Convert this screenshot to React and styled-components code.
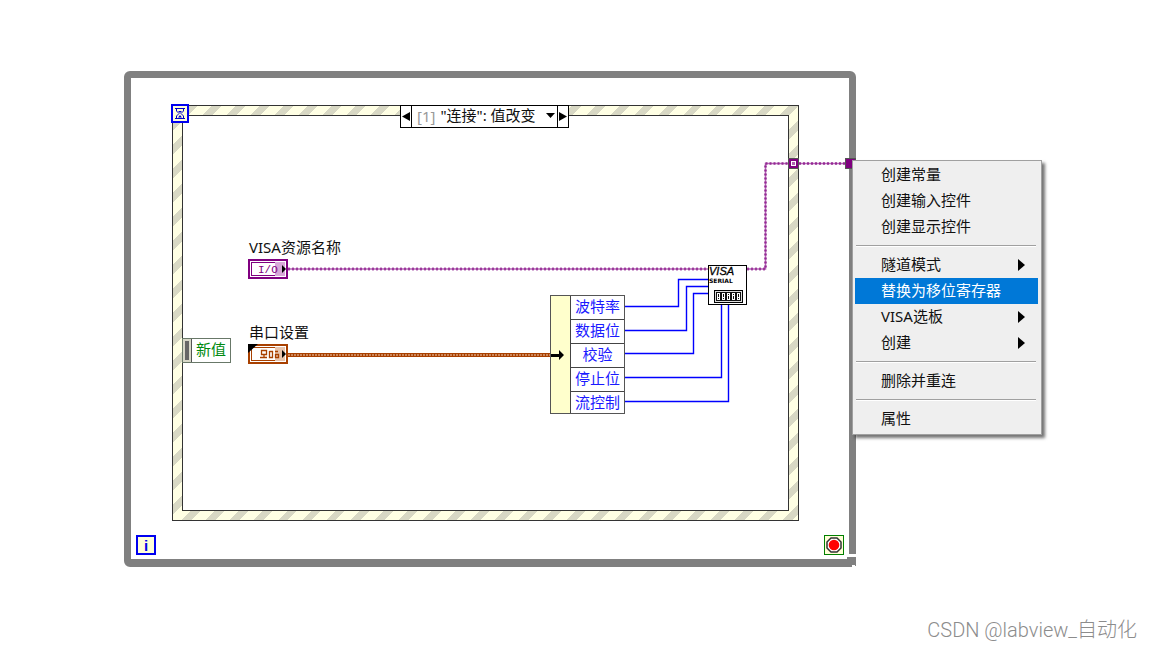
import React from 'react';
import styled, { createGlobalStyle, css } from 'styled-components';

const GlobalStyle = createGlobalStyle`
  *, *::before, *::after { box-sizing: border-box; }
  body {
    margin: 0;
    background: #fff;
    color: #111;
    font: 15px/20px "Noto Sans", "Noto Sans CJK SC", sans-serif;
  }
  button, select { font: inherit; color: inherit; }
`;

const ink = { loop: '#808080', visa: '#800080', cluster: '#a84000', wire: '#0000ff', frame: '#333' };

const Page = styled.div`
  display: flex;
  flex-direction: column;
  min-height: 100vh;
`;

const Canvas = styled.main`
  position: relative;
  flex: 1;
  min-height: 576px;
`;

/* Anything that sits at its own place on the free block-diagram canvas. */
const placed = css`
  position: absolute;
  left: ${(p) => p.$x}px;
  top: ${(p) => p.$y}px;
`;

const WhileLoop = styled.section`
  ${placed}
  display: flex;
  flex-direction: column;
  gap: 14px;
  width: 732px;
  height: 496px;
  padding: 27px 5px 4px;
  border: 7px solid ${ink.loop};
  border-bottom-width: 8px;
  border-radius: 6px 6px 0 6px;
`;

const LoopTerminals = styled.div`
  display: flex;
  justify-content: space-between;
`;

const ResizeCorner = styled.svg`
  ${placed}
  display: block;
`;

const EventFrame = styled.section`
  flex: 1;
  display: grid;
  margin: 0 45px 0 36px;
  padding: 9px;
  border: 1px solid ${ink.frame};
  background: repeating-linear-gradient(135deg, #ffffe4 0 10px, #d8d8c4 10px 17px);
`;

const EventBody = styled.div`
  border: 1px solid ${ink.frame};
  background: #fff;
`;

const Selector = styled.div`
  ${placed}
  display: flex;
  width: 169px;
  height: 23px;
  border: 1px solid #000;
  background: #fff;
`;

const StepButton = styled.button`
  display: grid;
  place-items: center;
  width: 10px;
  padding: 0;
  border: 0;
  background: none;
`;

const CaseField = styled.label`
  display: flex;
  flex: 1;
  align-items: center;
  gap: 5px;
  padding: 0 2px 2px 5px;
  border: solid #000;
  border-width: 0 1px;
`;

const CaseIndex = styled.span`
  color: #999;
`;

const CaseSelect = styled.select`
  flex: 1;
  min-width: 0;
  height: 19px;
  padding: 0;
  border: 0;
  appearance: none;
  background: none;
  line-height: 19px;
`;

const Wires = styled.svg`
  position: absolute;
  inset: 0;
  width: 100%;
  height: 100%;
  pointer-events: none;
`;

const Drawing = styled.svg`
  ${placed}
  display: block;
`;

const ControlNode = styled.figure`
  ${placed}
  display: flex;
  flex-direction: column;
  gap: 2px;
  margin: 0;
  white-space: nowrap;
`;

const Caption = styled.figcaption`
  padding-left: 1px;
`;

const Terminal = styled.div`
  display: grid;
  place-items: center;
  width: 20px;
  height: 20px;
  border: 2px solid #0000f0;
  background: #ffffd8;
  color: #0000e8;
  font: bold 15px/15px "Liberation Sans", sans-serif;
`;

const TimeoutTerminal = styled(Terminal)`
  ${placed}
  width: 18px;
  height: 19px;
`;

const StopTerminal = styled(Terminal)`
  border: 1px solid #008000;
`;

const EventData = styled.div`
  ${placed}
  display: flex;
  height: 25px;
  border: 1px solid #687868;
  background: #fff;
  color: #008a10;
`;

const Grip = styled.span`
  width: 9px;
  padding: 2px;
  border-right: 1px solid #555;
  background: #d8d8c8;

  &::before {
    content: "";
    display: block;
    height: 100%;
    background: #666;
  }
`;

const EventName = styled.span`
  padding: 0 4px;
`;

const Unbundle = styled.div`
  ${placed}
  display: flex;
  width: 75px;
  border: 1px solid #555;
  background: #ffffcc;
`;

const UnbundleInput = styled.div`
  display: grid;
  width: 19px;
  align-items: center;
`;

const FieldList = styled.ul`
  flex: 1;
  margin: 0;
  padding: 0;
  list-style: none;
  border-left: 1px solid #444;
  background: #fff;
`;

const Field = styled.li`
  height: 24px;
  border-bottom: 1px solid #444;
  color: #1a1aff;
  line-height: 21px;
  text-align: center;

  &:last-child { height: 21px; border-bottom: 0; }
`;

const Tunnel = styled.span`
  ${placed}
  display: grid;
  place-items: center;
  width: 11px;
  height: 11px;
  border: 1px solid #555;
  background: ${ink.visa};

  &::before {
    content: "";
    width: 5px;
    height: 5px;
    border: 1px solid #fff;
    background: #b060b0;
  }
`;

const LoopTunnel = styled(Tunnel)`
  &::before { display: none; }
`;

const Menu = styled.div`
  ${placed}
  display: flex;
  flex-direction: column;
  width: 190px;
  padding: 1px 3px 2px 2px;
  border: 1px solid #a0a0a0;
  background: #efefef;
  box-shadow: 3px 3px 3px rgba(0, 0, 0, 0.55);
`;

const MenuItem = styled.button`
  display: flex;
  align-items: center;
  justify-content: space-between;
  height: 26px;
  padding: 0 13px 2px 26px;
  border: 0;
  background: ${(p) => (p.$active ? '#0078d7' : 'transparent')};
  color: ${(p) => (p.$active ? '#fff' : '#111')};
  text-align: left;

  svg { margin-top: 2px; }
`;

const Separator = styled.hr`
  width: 180px;
  height: 2px;
  margin: 5px 1px;
  border: 0;
  border-top: 1px solid #a0a0a0;
  background: #fff;
`;

const Watermark = styled.footer`
  align-self: flex-end;
  padding: 0 15px 5px;
  color: #8c8c8c;
  font: 300 20px/26px Roboto, "Noto Sans CJK SC", sans-serif;
`;

const fields = ['波特率', '数据位', '校验', '停止位', '流控制'];

const menuGroups = [
  [{ label: '创建常量' }, { label: '创建输入控件' }, { label: '创建显示控件' }],
  [
    { label: '隧道模式', submenu: true },
    { label: '替换为移位寄存器', active: true },
    { label: 'VISA选板', submenu: true },
    { label: '创建', submenu: true },
  ],
  [{ label: '删除并重连' }],
  [{ label: '属性' }],
];

const visaPaths = ['M288 269H708', 'M747 269H765.5V163.5H788', 'M799 163.5H846'];

const fieldPaths = [
  'M625 306.5H678.5V279.5H708',
  'M625 330.5H686.5V286.5H708',
  'M625 353.5H693.5V293.5H708',
  'M625 377.5H721.5V305',
  'M625 401.5H728.5V305',
];

const Triangle = ({ dir = 'right', w = 7, h = 10 }) => {
  const d = {
    right: `M0 0L${w} ${h / 2}L0 ${h}Z`,
    left: `M${w} 0L0 ${h / 2}L${w} ${h}Z`,
    down: `M0 0H${w}L${w / 2} ${h}Z`,
  }[dir];
  return (
    <svg width={w} height={h} aria-hidden="true">
      <path d={d} fill="#000" />
    </svg>
  );
};

const ControlGlyph = ({ color, tint, cluster }) => (
  <svg width="40" height="20" aria-hidden="true">
    <rect x="1" y="1" width="38" height="18" fill="#fff" stroke={color} strokeWidth="2" />
    <rect x="3.5" y="3.5" width="33" height="13" fill="#fff" stroke={color} />
    <rect x="27" y="3" width="10" height="14" fill={tint} />
    {cluster ? (
      <>
        <path d="M13.5 6.5H18.5V10.5H13.5ZM12 13.5H19M16 11V13M21.5 7V13.5H24.5V7.5H21.5M27 7.5H30M27 10.5H30.5V13.5H27.5V10" fill="none" stroke={color} strokeWidth="1.3" />
        <path d="M0 0H10L0 9Z" fill="#000" />
      </>
    ) : (
      <text x="10" y="14" fill={color} fontFamily="Liberation Mono, monospace" fontSize="11">I/O</text>
    )}
    <path d="M34 6L38 10L34 14Z" fill="#000" />
  </svg>
);

export default function App() {
  return (
    <Page>
      <GlobalStyle />
      <Canvas>
        <WhileLoop $x={124} $y={71} aria-label="While">
          <EventFrame>
            <EventBody />
          </EventFrame>
          <LoopTerminals>
            <Terminal>i</Terminal>
            <StopTerminal>
              <svg width="16" height="16" aria-hidden="true">
                <path d="M5 1H11L15 5V11L11 15H5L1 11V5Z" fill="#fff" stroke="#333" strokeWidth="1.5" />
                <circle cx="8" cy="8" r="5.3" fill="#f00" />
              </svg>
            </StopTerminal>
          </LoopTerminals>
        </WhileLoop>
        <ResizeCorner $x={846} $y={554} width="12" height="14" aria-hidden="true">
          <path d="M3 0H12V14H0V5H3Z" fill="#fff" />
          <path d="M1 3H10V12H9V11H6V13H0V5H1Z" fill={ink.loop} />
        </ResizeCorner>

        <Wires aria-hidden="true" fill="none">
          {visaPaths.map((d) => (
            <g key={d} stroke={ink.visa}>
              <path d={d} strokeWidth="1.5" strokeOpacity="0.6" />
              <path d={d} strokeWidth="3" strokeDasharray="2 2" strokeOpacity="0.6" />
            </g>
          ))}
          <path d="M288 355H552" stroke={ink.cluster} strokeWidth="4" />
          <path d="M288 355H552" stroke="#f0d0b8" strokeWidth="1" strokeDasharray="2 1" />
          {fieldPaths.map((d) => (
            <path key={d} d={d} stroke={ink.wire} strokeWidth="1.4" />
          ))}
        </Wires>

        <Selector $x={400} $y={105}>
          <StepButton aria-label="上一个"><Triangle dir="left" w={8} h={9} /></StepButton>
          <CaseField>
            <CaseIndex>[1]</CaseIndex>
            <CaseSelect defaultValue="1">
              <option value="1">"连接": 值改变</option>
            </CaseSelect>
            <Triangle dir="down" w={9} h={5} />
          </CaseField>
          <StepButton aria-label="下一个"><Triangle w={8} h={9} /></StepButton>
        </Selector>

        <TimeoutTerminal $x={171} $y={104}>
          <svg width="10" height="13" fill="none" stroke="#0000c8" aria-hidden="true">
            <path d="M0 1.5H10M0 11.5H10M1.5 2V4L4 6.5L1.5 9V11M8.5 2V4L6 6.5L8.5 9V11" />
            <path d="M3 4H7L5 6ZM5 8L7 10.5H3Z" fill="#0000c8" stroke="none" />
          </svg>
        </TimeoutTerminal>

        <ControlNode $x={248} $y={237}>
          <Caption>VISA资源名称</Caption>
          <ControlGlyph color={ink.visa} tint="#d8a8d8" />
        </ControlNode>
        <ControlNode $x={248} $y={322}>
          <Caption>串口设置</Caption>
          <ControlGlyph color={ink.cluster} tint="#e8c4ac" cluster />
        </ControlNode>

        <EventData $x={182} $y={338}>
          <Grip />
          <EventName>新值</EventName>
        </EventData>

        <Unbundle $x={550} $y={295}>
          <UnbundleInput>
            <svg width="14" height="10" aria-hidden="true">
              <path d="M0 4H8V0L13 5L8 10V7H0Z" fill="#000" />
            </svg>
          </UnbundleInput>
          <FieldList>
            {fields.map((name) => <Field key={name}>{name}</Field>)}
          </FieldList>
        </Unbundle>

        <Drawing $x={708} $y={265} width="40" height="41" role="img" aria-label="VISA SERIAL">
          <rect x="0.5" y="0.5" width="38" height="39" fill="#fff" stroke="#000" />
          <text x="1" y="10" fontFamily="Liberation Sans, sans-serif" fontSize="11" fontStyle="italic" stroke="#000" strokeWidth="0.3">VISA</text>
          <text x="1" y="18" fontFamily="DejaVu Sans, sans-serif" fontSize="6" fontWeight="bold">SERIAL</text>
          <rect x="6.5" y="25.5" width="28" height="12" fill="#ddd" stroke="#000" />
          <rect x="8" y="27" width="25" height="9" fill="#111" />
          {[9, 14, 19, 24, 29].map((x, i) => (
            <g key={x} fill="none" stroke="#fff">
              <rect x={x + 0.5} y="28.5" width="2" height="6" />
              <path d={i === 2 || i === 3 ? `M${x + 1} 30.5h1` : `M${x + 1} 32.5h1`} />
            </g>
          ))}
        </Drawing>

        <Tunnel $x={788} $y={158} />
        <LoopTunnel $x={845} $y={158} />

        <Menu $x={852} $y={160}>
          {menuGroups.map((group, index) => (
            <React.Fragment key={group[0].label}>
              {index > 0 && <Separator />}
              {group.map((item) => (
                <MenuItem key={item.label} $active={item.active}>
                  {item.label}
                  {item.submenu && <Triangle w={7} h={12} />}
                </MenuItem>
              ))}
            </React.Fragment>
          ))}
        </Menu>
      </Canvas>
      <Watermark>CSDN @labview_自动化</Watermark>
    </Page>
  );
}
